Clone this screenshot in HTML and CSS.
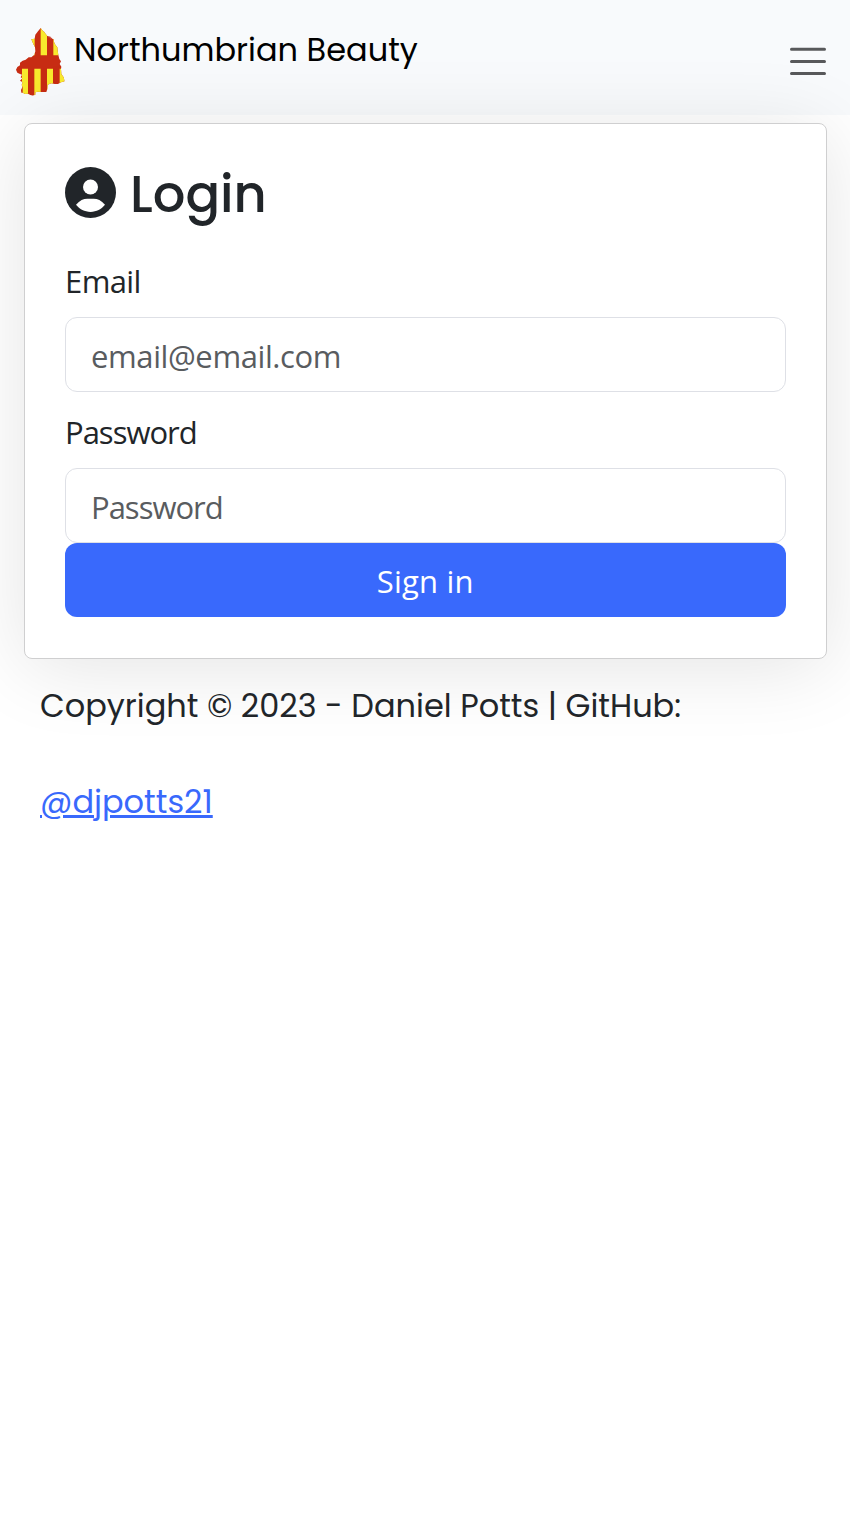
FILE: index.html
```
<!DOCTYPE html>
<html lang="en">
<head>
<meta charset="utf-8">
<title>Northumbrian Beauty</title>
<link rel="stylesheet" href="styles.css">
</head>
<body>
<nav class="navbar">
  <a class="brand" href="#">
    <svg class="logo" viewBox="48 39 147 204" aria-hidden="true">
      <defs><clipPath id="county"><path transform="translate(36 27)" d="M86 12L92 20L97 24L101 30L106 36L114 38L121 44L125 46L126 54L130 62L136 70L137 80L139 93L142 105L147 112L143 120L148 128L147 135L148 150L155 160L158 172L147 175L138 180L128 180L118 178L107 182L106 195L103 204L88 204L78 203L70 205L70 212L62 215L55 213L48 209L40 210L32 206L28 206L27 198L31 190L29 182L32 175L24 170L31 163L26 160L30 152L24 150L16 146L12 137L16 129L24 124L24 116L32 110L41 107L50 100L58 100L67 92L70 82L69 70L64 60L58 46L68 44L70 32L78 22Z"/></clipPath></defs>
      <g clip-path="url(#county)">
        <path fill="#c72c13" d="M40 30h160v220H40z"/>
        <path fill="#f8ea2d" d="M86 30h18v91H86zM122 30h19v91h-19zM160 30h22v91h-22zM66 161h18v54H66zM68 215h16v36H68zM103 161h19v90h-19zM141 161h18v90h-18zM179 161h20v90h-20z"/>
      </g>
      <path d="M145 66h7v5" fill="none" stroke="#d56a62" stroke-width="2"/>
    </svg>
    <span class="brand-name">Northumbrian Beauty</span>
  </a>
  <button class="toggler" aria-label="Toggle navigation">
    <svg viewBox="0 0 60 60" aria-hidden="true"><path d="M13.500 17.200h33M13.500 29.500h33M13.500 41.600h33"/></svg>
  </button>
</nav>
<main class="card">
  <h1 class="title">
    <svg class="user" viewBox="0 0 51 51" aria-hidden="true"><circle cx="25.5" cy="25.5" r="25.5" fill="#212529"/><circle cx="25.5" cy="20" r="7.5" fill="#fff"/><path fill="#fff" d="M11 37.800C14.800 33.400 18.500 31.800 22.300 31.800h6.400c3.800 0 7.500 1.600 11.300 6C36.400 42.300 31.500 44.900 25.500 44.900S14.600 42.300 11 37.800z"/></svg>
    <span class="title-text">Login</span>
  </h1>
  <form class="form">
    <label class="label" for="email">Email</label>
    <input class="field" id="email" type="email" placeholder="email@email.com">
    <label class="label tight" for="password">Password</label>
    <input class="field tight last" id="password" type="password" placeholder="Password">
    <button class="submit" type="button">Sign in</button>
  </form>
</main>
<footer class="footer">
  <p class="copyright">Copyright © 2023 - Daniel Potts | GitHub:</p>
  <a class="github" href="#">@djpotts21</a>
</footer>
</body>
</html>
```
FILE: styles.css
```
* { box-sizing: border-box; }
body { margin: 0; background: #fff; color: #212529; font-family: "Segoe UI", "Open Sans", sans-serif; font-size: 31px; }
.navbar { height: 115px; display: flex; justify-content: space-between; align-items: flex-start; padding: 28px 12px 0 16px; background: #f8fafc; }
.brand { display: flex; gap: 9px; color: #000; text-decoration: none; font-family: Poppins, Inter, sans-serif; font-size: 32px; }
.logo { width: 49px; height: 68px; }
.brand-name { line-height: 44px; white-space: nowrap; }
.toggler { border: 0; padding: 0; margin-top: 4px; background: none; width: 60px; height: 60px; }
.toggler svg { display: block; width: 60px; height: 60px; fill: none; stroke: #58595b; stroke-width: 3; stroke-linecap: round; }
.card { position: relative; height: 536px; margin: 8px 23.5px 0 24px; padding: 39px 40px; background: #fff; border: 1.5px solid #cfcfd0; border-radius: 8px; box-shadow: 0 8px 80px rgba(0,0,0,.11); }
.title { display: flex; align-items: center; gap: 14px; height: 58px; margin: 0 0 36px; font-family: Poppins, Inter, sans-serif; font-weight: 500; font-size: 51.2px; }
.title-text { padding-top: 5px; }
.user { width: 51px; height: 51px; }
.form { display: flex; flex-direction: column; }
.label { line-height: 48px; height: 48px; margin-bottom: 12px; font-size: 31px; letter-spacing: -0.6px; }
.field { width: 100%; height: 75px; padding: 2px 25px 0; margin: 0 0 16px; border: 1.5px solid #dee0e6; border-radius: 12px; background: #fff; font: 31px "Segoe UI", "Open Sans", sans-serif; color: #212529; letter-spacing: -0.4px; }
.field::placeholder { color: #595c5f; opacity: 1; }
.tight { letter-spacing: -1px; }
.last { margin: 0; }
.submit { height: 74px; padding: 2px 0 0; border: 0; border-radius: 12px; background: #3969fc; color: #fff; font: 31px "Segoe UI", "Open Sans", sans-serif; letter-spacing: 0.2px; }
.footer { position: relative; margin-top: -1px; padding: 0 40px; font-family: Poppins, Inter, sans-serif; font-size: 32px; line-height: 96px; }
.copyright { margin: 0; white-space: nowrap; }
.github { color: #3969fc; text-decoration-thickness: 3px; }
```
